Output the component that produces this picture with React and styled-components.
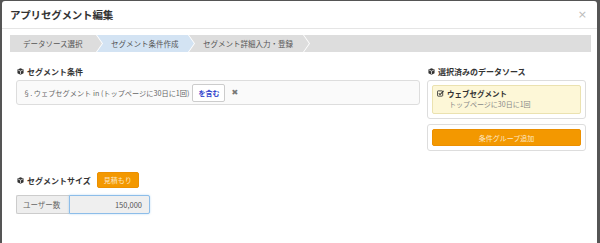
import styled, { createGlobalStyle } from 'styled-components';

const GlobalStyle = createGlobalStyle`
  html, body {
    margin: 0;
    padding: 0;
    background: #555;
    overflow: hidden;
  }
  body {
    font-family: "Noto Sans CJK JP", "Noto Sans", sans-serif;
    color: #333;
  }
`;

const Backdrop = styled.div`
  padding: 1px 3px 0 2px;
  height: 243px;
  box-sizing: border-box;
  overflow: hidden;
`;

const Modal = styled.div`
  background: #fff;
  border-radius: 3px 3px 0 0;
  height: 260px;
`;

const Header = styled.div`
  display: flex;
  align-items: center;
  justify-content: space-between;
  height: 27px;
  padding: 0 10px 0 8px;
  border-bottom: 1px solid #e5e5e5;
`;

const Title = styled.h4`
  margin: 0;
  font-size: 10.5px;
  font-weight: bold;
  color: #333;
  letter-spacing: -0.2px;
`;

const Close = styled.span`
  font-family: "DejaVu Sans", sans-serif;
  font-size: 11px;
  color: #bbb;
  line-height: 1;
`;

const Body = styled.div`
  padding: 6px 6px 0 8px;
`;

const Steps = styled.div`
  display: flex;
  height: 17px;
  background: #fff;
`;

const Step = styled.div`
  display: flex;
  align-items: center;
  width: ${(p) => p.$w}px;
  margin-left: ${(p) => (p.$first ? 0 : -5)}px;
  padding-left: ${(p) => (p.$first ? 13 : 14)}px;
  box-sizing: border-box;
  font-size: 7.5px;
  color: #555;
  background: ${(p) => (p.$active ? '#d3e3f3' : '#ddd')};
  clip-path: ${(p) =>
    p.$first
      ? 'polygon(0 0, calc(100% - 6px) 0, 100% 50%, calc(100% - 6px) 100%, 0 100%)'
      : 'polygon(0 0, calc(100% - 6px) 0, 100% 50%, calc(100% - 6px) 100%, 0 100%, 6px 50%)'};
  white-space: nowrap;
`;

const StepFill = styled.div`
  flex: 1;
  margin-left: -5px;
  background: #ddd;
  clip-path: polygon(0 0, 100% 0, 100% 100%, 0 100%, 6px 50%);
`;

const Row = styled.div`
  display: grid;
  grid-template-columns: 1fr 159px;
  gap: 7px;
  padding: 0 5px 0 6px;
  margin-top: 13px;
`;

const Column = styled.div`
  display: flex;
  flex-direction: column;
`;

const SectionTitle = styled.div`
  display: flex;
  align-items: center;
  gap: 3px;
  height: 12px;
  padding-left: 1px;
  font-size: 8px;
  font-weight: bold;
  color: #333;
  margin-bottom: ${(p) => (p.$inline ? 0 : 3)}px;
`;

const ConditionBox = styled.div`
  display: flex;
  align-items: center;
  height: 23px;
  padding: 0 6px;
  border: 1px solid #ddd;
  border-radius: 3px;
  background: #fafafa;
  font-size: 7.2px;
  color: #666;
  white-space: pre;
`;

const IncludeButton = styled.span`
  display: inline-flex;
  align-items: center;
  height: 16px;
  padding: 0 5px;
  margin-left: 3px;
  border: 1px solid #ccc;
  border-radius: 2px;
  background: #fff;
  color: #3344cc;
  font-weight: bold;
  font-size: 7px;
`;

const Remove = styled.span`
  margin-left: 6px;
  font-family: "DejaVu Sans", sans-serif;
  font-weight: bold;
  font-size: 8px;
  color: #777;
`;

const Panel = styled.div`
  border: 1px solid #ddd;
  border-radius: 3px;
  padding: 4px 4px;
  margin-bottom: 5px;
  background: #fff;
`;

const SourceCard = styled.div`
  background: #fdf7d7;
  border: 1px solid #ebe2b0;
  border-radius: 2px;
  padding: 2px 4px 3px 4px;
`;

const SourceName = styled.div`
  display: flex;
  align-items: center;
  gap: 3px;
  font-size: 7.5px;
  font-weight: bold;
  color: #333;
  line-height: 11px;
`;

const SourceDetail = styled.div`
  padding-left: 12px;
  font-size: 7px;
  color: #888;
  line-height: 11px;
`;

const OrangeButton = styled.button`
  display: flex;
  align-items: center;
  justify-content: center;
  width: ${(p) => (p.$block ? '100%' : 'auto')};
  height: ${(p) => p.$h}px;
  padding: 0 6px;
  border: 1px solid #ec9000;
  border-radius: 2px;
  background: #f39800;
  color: #fde7c4;
  font-family: inherit;
  font-size: 7px;
  cursor: pointer;
`;

const SizeSection = styled.div`
  padding: 0 6px;
  margin-top: 16px;
`;

const SizeTitleRow = styled.div`
  display: flex;
  align-items: center;
  gap: 6px;
  margin-bottom: 7px;
`;

const InputGroup = styled.div`
  display: flex;
  width: 134px;
  height: 19px;
`;

const Addon = styled.span`
  display: flex;
  align-items: center;
  padding: 0 6px;
  width: 53px;
  box-sizing: border-box;
  background: #eee;
  border: 1px solid #ccc;
  border-right: none;
  border-radius: 2px 0 0 2px;
  font-size: 7.5px;
  color: #666;
`;

const Input = styled.div`
  flex: 1;
  display: flex;
  align-items: center;
  justify-content: flex-end;
  padding: 0 7px;
  background: #efefef;
  border: 1px solid #8dbde9;
  border-radius: 0 2px 2px 0;
  box-shadow: 0 0 2px rgba(102, 175, 233, 0.5);
  font-size: 7.5px;
  color: #555;
`;

const CubeIcon = () => (
  <svg width="7" height="7" viewBox="0 0 16 16">
    <path d="M8 0.5 L15 3.5 V12 L8 15.5 L1 12 V3.5 Z" fill="#333" />
    <path d="M8 7.2 V14 M2.5 4.5 L8 7.2 L13.5 4.5" stroke="#fff" strokeWidth="1.6" fill="none" />
  </svg>
);

const CheckIcon = () => (
  <svg width="7" height="7" viewBox="0 0 16 16">
    <rect x="1" y="2" width="12" height="12" rx="1.5" fill="none" stroke="#333" strokeWidth="2" />
    <path d="M4 7.5 L7 10.5 L15 2" stroke="#333" strokeWidth="2.4" fill="none" />
  </svg>
);

export default function App() {
  return (
    <>
      <GlobalStyle />
      <Backdrop>
        <Modal>
          <Header>
            <Title>アプリセグメント編集</Title>
            <Close>×</Close>
          </Header>
          <Body>
            <Steps>
              <Step $first $w={92}>データソース選択</Step>
              <Step $active $w={97}>セグメント条件作成</Step>
              <Step $w={120}>セグメント詳細入力・登録</Step>
              <StepFill />
            </Steps>
            <Row>
              <Column>
                <SectionTitle>
                  <CubeIcon />
                  セグメント条件
                </SectionTitle>
                <ConditionBox>
                  {'§. ウェブセグメント in (トップページに30日に1回)'}
                  <IncludeButton>を含む</IncludeButton>
                  <Remove>✖</Remove>
                </ConditionBox>
              </Column>
              <Column>
                <SectionTitle>
                  <CubeIcon />
                  選択済みのデータソース
                </SectionTitle>
                <Panel>
                  <SourceCard>
                    <SourceName>
                      <CheckIcon />
                      ウェブセグメント
                    </SourceName>
                    <SourceDetail>トップページに30日に1回</SourceDetail>
                  </SourceCard>
                </Panel>
                <Panel>
                  <OrangeButton $block $h={17}>条件グループ追加</OrangeButton>
                </Panel>
              </Column>
            </Row>
            <SizeSection>
              <SizeTitleRow>
                <SectionTitle $inline>
                  <CubeIcon />
                  セグメントサイズ
                </SectionTitle>
                <OrangeButton $h={16}>見積もり</OrangeButton>
              </SizeTitleRow>
              <InputGroup>
                <Addon>ユーザー数</Addon>
                <Input>150,000</Input>
              </InputGroup>
            </SizeSection>
          </Body>
        </Modal>
      </Backdrop>
    </>
  );
}
